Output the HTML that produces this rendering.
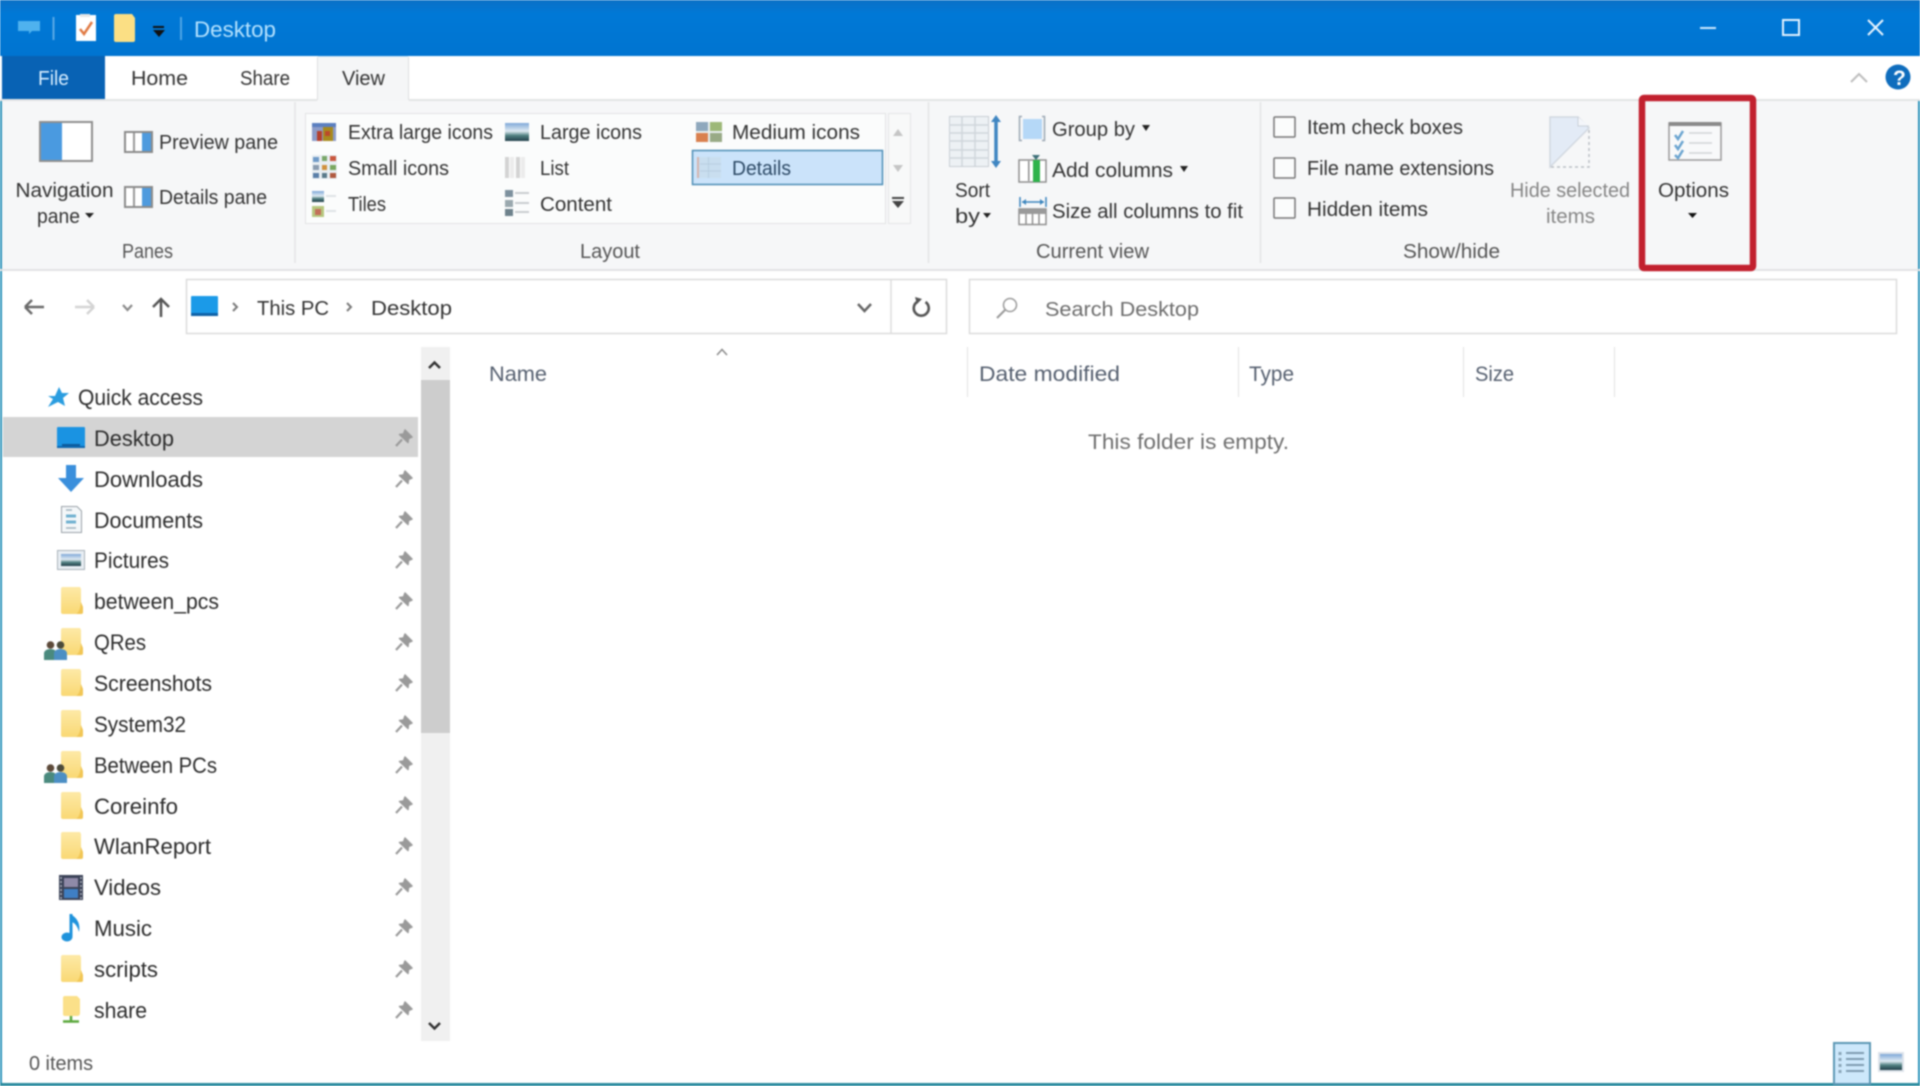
<!DOCTYPE html>
<html lang="en"><head><meta charset="utf-8"><title>Desktop</title>
<style>
html,body{margin:0;padding:0;background:#fff;width:1920px;height:1086px;overflow:hidden}
svg{display:block;filter:blur(.7px)}
text{font-family:"Liberation Sans",sans-serif;font-size:20px;fill:#333;white-space:pre}
.n{font-size:22px;fill:#2c2c2c}
.g{fill:#555}
.d{fill:#868686}
.h{font-size:21px;fill:#566070}
</style></head><body>
<svg width="1920" height="1086" viewBox="0 0 1920 1086" xmlns="http://www.w3.org/2000/svg">
<defs>
<linearGradient id="fg" x1="0" y1="0" x2="0" y2="1"><stop offset="0" stop-color="#fde9a6"/><stop offset="1" stop-color="#f9d874"/></linearGradient>
<linearGradient id="tb" x1="0" y1="0" x2="0" y2="1"><stop offset="0" stop-color="#0a70c6"/><stop offset=".25" stop-color="#0078d6"/><stop offset="1" stop-color="#0074d0"/></linearGradient>
<linearGradient id="pic" x1="0" y1="0" x2="0" y2="1"><stop offset="0" stop-color="#7fa8d8"/><stop offset=".45" stop-color="#dfeaf2"/><stop offset=".7" stop-color="#4f7f80"/><stop offset="1" stop-color="#233f4a"/></linearGradient>
<symbol id="folder" viewBox="0 0 22 27" width="22" height="27"><path d="M0 2Q0 0 2 0H19L20 2V18L22 20V25Q22 27 20 27H2Q0 27 0 25Z" fill="url(#fg)"/><path d="M20 15L22 20V25Q22 27 20 27H15Q19 25 20 15Z" fill="#f1c655"/></symbol>
<symbol id="pin" viewBox="0 0 18 18" width="18" height="18"><path d="M1 17L7 10.500" stroke="#9a9a9a" stroke-width="2.200" fill="none"/><path d="M10 1L17 8L13.500 9.500L13 13.500L4.500 5.500L8.500 5Z" fill="#9a9a9a" stroke="#9a9a9a" stroke-width="1.500" stroke-linejoin="round"/></symbol>
<symbol id="ppl" viewBox="0 0 23 20" width="23" height="20"><circle cx="6.500" cy="5" r="3.800" fill="#5d4a3a"/><circle cx="16.500" cy="5" r="3.800" fill="#4b4a3a"/><path d="M0 20V13Q1 9 6.500 9T12 13V20Z" fill="#4a8a7e"/><path d="M10 20V13Q11 9 16.500 9T23 13V20Z" fill="#4c8fc4"/></symbol>
<symbol id="pane" viewBox="0 0 29 22" width="29" height="22"><rect x="1" y="1" width="27" height="20" fill="#fff" stroke="#8b8b8b" stroke-width="2"/><rect x="9" y="2" width="2" height="18" fill="#999"/><rect x="18" y="2" width="9" height="18" fill="#4f9bde"/></symbol>
</defs>

<rect width="1920" height="1086" fill="#fff"/>
<rect x="0" y="56" width="2" height="1030" fill="#2b93ba"/>
<rect x="1918" y="56" width="2" height="1030" fill="#2b93ba"/>
<rect x="0" y="1083" width="1920" height="3" fill="#2a8b9e"/>

<rect width="1920" height="56" fill="url(#tb)"/>
<path d="M18 21H40V31H32L29 34V31H18Z" fill="#4fb2ee"/>
<rect x="52.500" y="17" width="2" height="23" fill="#5aa9e6"/>
<rect x="76" y="15" width="20" height="26" fill="#fff"/><rect x="80" y="14" width="10" height="3" fill="#e5e5e5"/>
<path d="M80 29L84 34L92 22" fill="none" stroke="#e07a44" stroke-width="2.500"/>
<path d="M114 16Q114 14 116 14H132L135 18V40Q135 42 133 42H116Q114 42 114 40Z" fill="#fbdf84"/>
<rect x="153" y="26" width="11" height="2" fill="#111"/><path d="M153 30H165L159 37Z" fill="#111"/>
<rect x="180" y="17" width="2" height="23" fill="#4fa5e4"/>
<text x="194" y="37" textLength="82" lengthAdjust="spacingAndGlyphs" style="fill:#b4e2ff;font-size:22px">Desktop</text>
<rect x="1700" y="27" width="16" height="2" fill="#cfeaff"/>
<rect x="1783" y="20" width="16" height="15" fill="none" stroke="#e4f3ff" stroke-width="2"/>
<path d="M1868 20L1883 35M1883 20L1868 35" stroke="#e8f5ff" stroke-width="2"/>

<rect x="0" y="56" width="1920" height="44" fill="#fff"/>
<rect x="2" y="56" width="103" height="43" fill="#0862b4"/>
<rect x="0" y="99" width="1920" height="2" fill="#e3e4e5"/>
<rect x="317" y="57" width="92" height="44" fill="#f5f6f7"/>
<path d="M317.500 100V57M408.500 100V57" stroke="#dedfe0"/>
<rect x="318" y="56" width="90" height="1" fill="#cfe6f5"/>
<text x="38" y="85" textLength="31" lengthAdjust="spacingAndGlyphs" style="fill:#d7edff">File</text>
<text x="131" y="85" textLength="57" lengthAdjust="spacingAndGlyphs">Home</text>
<text x="240" y="85" textLength="50" lengthAdjust="spacingAndGlyphs">Share</text>
<text x="342" y="85" textLength="43" lengthAdjust="spacingAndGlyphs">View</text>
<path d="M1851 82L1859 74L1867 82" fill="none" stroke="#bdbdbd" stroke-width="2"/>
<circle cx="1898" cy="77" r="12.500" fill="#0f6dbd"/>
<text x="1893" y="85" style="fill:#fff;font-size:21px;font-weight:bold">?</text>

<rect x="2" y="101" width="1916" height="168" fill="#f6f7f8"/>
<rect x="0" y="269" width="1920" height="2" fill="#e2e3e4"/>
<path d="M295 102V263M928.500 102V263M1260.500 102V263" stroke="#e3e4e5" stroke-width="1.500"/>

<rect x="40" y="122" width="52" height="39" fill="#fff" stroke="#8f8f8f" stroke-width="2"/>
<rect x="41" y="123" width="21" height="37" fill="#4a9ae0"/>
<text x="15.500" y="197" textLength="98" lengthAdjust="spacingAndGlyphs">Navigation</text>
<text x="37" y="223" textLength="43" lengthAdjust="spacingAndGlyphs">pane</text>
<path d="M85 213H94L89.500 218Z" fill="#222"/>
<use href="#pane" x="124" y="131"/>
<use href="#pane" x="124" y="186"/>
<text x="159" y="149" textLength="119" lengthAdjust="spacingAndGlyphs">Preview pane</text>
<text x="159" y="204" textLength="108" lengthAdjust="spacingAndGlyphs">Details pane</text>
<text x="122" y="258" textLength="51" lengthAdjust="spacingAndGlyphs" class="g">Panes</text>

<rect x="305.500" y="113.500" width="580" height="110" fill="#fbfcfc" stroke="#e2e3e4"/>
<rect x="888.500" y="113.500" width="22" height="110" fill="#f8f9f9" stroke="#e4e5e6"/>
<path d="M893 136L898 129L903 136Z" fill="#c5c5c5"/>
<path d="M893 165L898 172L903 165Z" fill="#c5c5c5"/>
<rect x="892" y="197" width="12" height="2" fill="#444"/><path d="M892 201H904L898 208Z" fill="#444"/>
<rect x="692.500" y="150.500" width="190" height="34" fill="#cbe3fa" stroke="#4d8db5" stroke-width="1.500"/>

<g>
<rect x="312" y="123" width="24" height="18" fill="#8d9cc8"/><rect x="312" y="123" width="24" height="4" fill="#5b7fc0"/>
<rect x="317" y="131" width="5" height="10" fill="#b5402d"/><rect x="323" y="127" width="10" height="14" fill="#a88a1e"/><rect x="325" y="131" width="5" height="5" fill="#bb4a2a"/>
</g>
<g>
<rect x="312" y="155" width="25" height="24" fill="#e8eef2"/>
<rect x="313" y="157" width="6" height="5" fill="#6f9bc8"/><rect x="322" y="156" width="5" height="5" fill="#7aa76a"/><rect x="330" y="156" width="6" height="5" fill="#c9583f"/>
<rect x="313" y="165" width="6" height="5" fill="#8a9cb0"/><rect x="322" y="165" width="5" height="5" fill="#d0913c"/><rect x="330" y="165" width="6" height="5" fill="#7aa760"/>
<rect x="313" y="173" width="6" height="5" fill="#5a7fa8"/><rect x="322" y="173" width="5" height="5" fill="#5a7a8a"/><rect x="330" y="173" width="6" height="5" fill="#b05a40"/>
</g>
<g>
<rect x="312" y="191" width="12" height="11" fill="url(#pic)"/><rect x="326" y="195" width="10" height="2" fill="#dfe2e5"/>
<rect x="312" y="206" width="12" height="11" fill="#b6c77e"/><rect x="315" y="209" width="6" height="6" fill="#c2705a"/><rect x="326" y="210" width="10" height="2" fill="#dfe2e5"/>
</g>
<text x="348" y="139" textLength="145" lengthAdjust="spacingAndGlyphs">Extra large icons</text>
<text x="348" y="175" textLength="101" lengthAdjust="spacingAndGlyphs">Small icons</text>
<text x="348" y="211" textLength="38" lengthAdjust="spacingAndGlyphs">Tiles</text>
<rect x="505" y="123" width="24" height="18" fill="url(#pic)"/>
<g fill="#d3d3d3"><rect x="505" y="157" width="4" height="21"/><rect x="516" y="157" width="4" height="21"/><rect x="510" y="157" width="4" height="21" fill="#ececec"/><rect x="521" y="157" width="4" height="21" fill="#ececec"/></g>
<g><rect x="505" y="190" width="8" height="7" fill="#7d919e"/><rect x="505" y="200" width="8" height="7" fill="#9aa8ae"/><rect x="505" y="209" width="8" height="7" fill="#6e828c"/>
<rect x="515" y="192" width="14" height="2" fill="#c9ccd0"/><rect x="515" y="202" width="14" height="2" fill="#c9ccd0"/><rect x="515" y="211" width="14" height="2" fill="#c9ccd0"/></g>
<text x="540" y="139" textLength="102" lengthAdjust="spacingAndGlyphs">Large icons</text>
<text x="540" y="175" textLength="29" lengthAdjust="spacingAndGlyphs">List</text>
<text x="540" y="211" textLength="72" lengthAdjust="spacingAndGlyphs">Content</text>
<g><rect x="696" y="122" width="26" height="20" fill="#e8eef0"/><rect x="696" y="122" width="12" height="9" fill="#8fa8bd"/><rect x="710" y="122" width="12" height="9" fill="#9db878"/><rect x="696" y="133" width="12" height="9" fill="#d9804f"/><rect x="710" y="133" width="12" height="9" fill="#98aa86"/></g>
<text x="732" y="139" textLength="128" lengthAdjust="spacingAndGlyphs">Medium icons</text>
<g><rect x="697" y="157" width="24" height="21" fill="#c9deef"/><rect x="697" y="157" width="2" height="21" fill="#d4b4ae"/><path d="M700 164H721M700 171H721" stroke="#b7cde0"/><path d="M708.500 157V178" stroke="#b7cde0"/></g>
<text x="732" y="175" textLength="59" lengthAdjust="spacingAndGlyphs" style="fill:#2d4a66">Details</text>
<text x="580" y="258" textLength="60" lengthAdjust="spacingAndGlyphs" class="g">Layout</text>

<g>
<rect x="949.500" y="116.500" width="39" height="50" fill="#edf1f4" stroke="#c8ced4"/>
<path d="M949 125H989M949 133H989M949 141H989M949 150H989M949 158H989M962 116V166M975 116V166" stroke="#cfd6dc" stroke-width="1.500"/>
<path d="M996 118V165" stroke="#3f86c2" stroke-width="3.500"/>
<path d="M991 122L996 115L1001 122ZM991 161L996 168L1001 161Z" fill="#3f86c2"/>
</g>
<text x="955" y="197" textLength="35" lengthAdjust="spacingAndGlyphs">Sort</text>
<text x="955" y="223" textLength="25" lengthAdjust="spacingAndGlyphs">by</text>
<path d="M983 213H991L987 218Z" fill="#222"/>
<rect x="1023" y="119" width="19" height="20" fill="#b5d8f7"/>
<path d="M1022 116.500H1019.500V140.500H1022M1042 116.500H1044.500V140.500H1042" fill="none" stroke="#9ba8b4" stroke-width="1.500"/>
<text x="1052" y="136" textLength="83" lengthAdjust="spacingAndGlyphs">Group by</text>
<path d="M1142 125H1150L1146 131Z" fill="#222"/>
<rect x="1019" y="160" width="27" height="22" fill="#fff" stroke="#8e8e8e" stroke-width="1.500"/>
<rect x="1028" y="161" width="1.500" height="20" fill="#8e8e8e"/>
<rect x="1033" y="160" width="7" height="22" fill="#2eb34b"/>
<path d="M1032 155H1040L1036 160Z" fill="#3d6f78"/>
<text x="1052" y="177" textLength="121" lengthAdjust="spacingAndGlyphs">Add columns</text>
<path d="M1180 166H1188L1184 172Z" fill="#222"/>
<path d="M1020 197V207M1046 197V207M1022 202H1044" stroke="#3b85be" stroke-width="1.500" fill="none"/>
<path d="M1022 202L1026 199V205ZM1044 202L1040 199V205Z" fill="#3b85be"/>
<rect x="1019" y="209" width="27" height="15.500" fill="#fff" stroke="#8e8e8e" stroke-width="1.500"/>
<rect x="1019" y="209" width="27" height="5" fill="#9a9a9a"/>
<path d="M1026 214V224M1032.500 214V224M1039 214V224" stroke="#8e8e8e" stroke-width="1.500"/>
<text x="1052" y="218" textLength="191" lengthAdjust="spacingAndGlyphs">Size all columns to fit</text>
<text x="1036" y="258" textLength="113" lengthAdjust="spacingAndGlyphs" class="g">Current view</text>

<g fill="#fbfcfc" stroke="#777" stroke-width="1.500">
<rect x="1274" y="117" width="21" height="20" rx="1"/>
<rect x="1274" y="158" width="21" height="20" rx="1"/>
<rect x="1274" y="198" width="21" height="20" rx="1"/>
</g>
<text x="1307" y="134" textLength="156" lengthAdjust="spacingAndGlyphs">Item check boxes</text>
<text x="1307" y="175" textLength="187" lengthAdjust="spacingAndGlyphs">File name extensions</text>
<text x="1307" y="216" textLength="121" lengthAdjust="spacingAndGlyphs">Hidden items</text>
<path d="M1550 117H1578L1589 128L1550 167Z" fill="#e3ebf6" stroke="#d2d8e0" stroke-width="1.500"/>
<path d="M1578 117V126H1589" fill="#f4f6fa" stroke="#c9d0d8"/>
<path d="M1589 130V167H1551" fill="none" stroke="#b9bec4" stroke-width="1.500" stroke-dasharray="3 3"/>
<text x="1510" y="197" textLength="120" lengthAdjust="spacingAndGlyphs" class="d">Hide selected</text>
<text x="1546" y="223" textLength="49" lengthAdjust="spacingAndGlyphs" class="d">items</text>
<text x="1403" y="258" textLength="97" lengthAdjust="spacingAndGlyphs" class="g">Show/hide</text>

<rect x="1669" y="123" width="52" height="37" fill="#f8f9fa" stroke="#9a9a9a" stroke-width="1.500"/>
<rect x="1669" y="122" width="52" height="4" fill="#8a8a8a"/>
<path d="M1675 135L1678 139L1683 131M1675 145L1678 149L1683 141M1675 155L1678 158L1683 150" fill="none" stroke="#6aa4d0" stroke-width="2.500"/>
<path d="M1689 133H1712M1689 143H1712M1689 153H1712" stroke="#d0d3d6" stroke-width="1.500"/>
<text x="1658" y="197" textLength="71" lengthAdjust="spacingAndGlyphs">Options</text>
<path d="M1688 213H1697L1692.500 218Z" fill="#111"/>
<rect x="1642" y="98" width="111" height="170" rx="2" fill="none" stroke="#c2202e" stroke-width="6.500"/>

<path d="M25 307H44M25 307L32 300M25 307L32 314" fill="none" stroke="#6a6a6a" stroke-width="2.500"/>
<path d="M75 307H94M94 307L87 300M94 307L87 314" fill="none" stroke="#d4d4d4" stroke-width="2.500"/>
<path d="M123 305L127.500 310L132 305" fill="none" stroke="#8a8a8a" stroke-width="2.200"/>
<path d="M161 317V299M153 307L161 299L169 307" fill="none" stroke="#555" stroke-width="2.500"/>
<rect x="186.500" y="279.500" width="760" height="54" fill="#fff" stroke="#dcdcdc" stroke-width="1.500"/>
<path d="M891 280V334" stroke="#dcdcdc" stroke-width="1.500"/>
<rect x="191" y="296" width="27" height="20" rx="1" fill="#1b9ae8"/><rect x="191" y="313" width="27" height="3" fill="#0e62a8"/>
<path d="M233 303L237 307L233 311" fill="none" stroke="#7a7a7a" stroke-width="2"/>
<text x="257" y="315" textLength="72" lengthAdjust="spacingAndGlyphs">This PC</text>
<path d="M347 303L351 307L347 311" fill="none" stroke="#7a7a7a" stroke-width="2"/>
<text x="371" y="315" textLength="81" lengthAdjust="spacingAndGlyphs">Desktop</text>
<path d="M858 304L864.500 311L871 304" fill="none" stroke="#666" stroke-width="2.500"/>
<path d="M925.500 302A7.500 7.500 0 1 1 917 302" fill="none" stroke="#555" stroke-width="2.600"/>
<path d="M915 297L922 299L917 304Z" fill="#555"/>
<rect x="969.500" y="279.500" width="927" height="54" fill="#fff" stroke="#dcdcdc" stroke-width="1.500"/>
<circle cx="1010" cy="305" r="6.500" fill="none" stroke="#9a9a9a" stroke-width="1.500"/>
<path d="M1005 310L997 318" stroke="#9a9a9a" stroke-width="2"/>
<text x="1045" y="316" textLength="154" lengthAdjust="spacingAndGlyphs" style="fill:#6d6d6d">Search Desktop</text>

<rect x="421" y="347" width="29" height="694" fill="#f0f0f0"/>
<rect x="421" y="380" width="29" height="353" fill="#cdcdcd"/>
<path d="M429 368L434.500 362.500L440 368" fill="none" stroke="#333" stroke-width="2.500"/>
<path d="M429 1023L434.500 1028.500L440 1023" fill="none" stroke="#333" stroke-width="2.500"/>

<rect x="3" y="417" width="415" height="40" fill="#d4d4d4"/>
<path d="M59 387L62 393H69L63 398L65 406L58 402L48 407L53 399L48 396H55Z" fill="#2a9de0"/>
<text x="78" y="405" textLength="125" lengthAdjust="spacingAndGlyphs" class="n">Quick access</text>

<rect x="57" y="427" width="28" height="21" rx="1" fill="#1a93e2"/><rect x="62" y="444" width="18" height="2" fill="#0d5a9a"/><rect x="57" y="446" width="28" height="2" fill="#0c67b0"/>
<text x="94" y="446" textLength="80" lengthAdjust="spacingAndGlyphs" class="n">Desktop</text>
<path d="M66 465H76V478H84L71 492L58 478H66Z" fill="#3a8fdc"/>
<text x="94" y="487" textLength="109" lengthAdjust="spacingAndGlyphs" class="n">Downloads</text>
<path d="M61.500 506.500H77L81.500 511V532.500H61.500Z" fill="#f4f7f9" stroke="#9aa2a8"/>
<path d="M66 516H76M66 522H76" stroke="#6fb0d0" stroke-width="3"/><path d="M66 510H72M66 528H76" stroke="#9fb2bd" stroke-width="1.500"/>
<text x="94" y="528" textLength="109" lengthAdjust="spacingAndGlyphs" class="n">Documents</text>
<rect x="57.500" y="550.500" width="27" height="19" fill="#e8eef3" stroke="#a8b2ba"/><rect x="61" y="554" width="20" height="12" fill="url(#pic)"/>
<text x="94" y="568" textLength="75" lengthAdjust="spacingAndGlyphs" class="n">Pictures</text>

<use href="#folder" x="61" y="587"/>
<text x="94" y="609" textLength="125" lengthAdjust="spacingAndGlyphs" class="n">between_pcs</text>
<use href="#folder" x="61" y="628"/><use href="#ppl" x="44" y="640"/>
<text x="94" y="650" textLength="52" lengthAdjust="spacingAndGlyphs" class="n">QRes</text>
<use href="#folder" x="61" y="669"/>
<text x="94" y="691" textLength="118" lengthAdjust="spacingAndGlyphs" class="n">Screenshots</text>
<use href="#folder" x="61" y="710"/>
<text x="94" y="732" textLength="92" lengthAdjust="spacingAndGlyphs" class="n">System32</text>
<use href="#folder" x="61" y="751"/><use href="#ppl" x="44" y="763"/>
<text x="94" y="773" textLength="123" lengthAdjust="spacingAndGlyphs" class="n">Between PCs</text>
<use href="#folder" x="61" y="792"/>
<text x="94" y="814" textLength="84" lengthAdjust="spacingAndGlyphs" class="n">Coreinfo</text>
<use href="#folder" x="61" y="832"/>
<text x="94" y="854" textLength="117" lengthAdjust="spacingAndGlyphs" class="n">WlanReport</text>
<rect x="59" y="875" width="24" height="25" fill="#3b4257"/><rect x="64" y="878" width="14" height="9" fill="#8f8aa8"/><rect x="64" y="889" width="14" height="9" fill="#3f7fc4"/>
<path d="M61 877V899M81 877V899" stroke="#b0b4c0" stroke-width="1.500" stroke-dasharray="2 2"/>
<text x="94" y="895" textLength="67" lengthAdjust="spacingAndGlyphs" class="n">Videos</text>
<path d="M71 914V936" stroke="#1f93dc" stroke-width="3"/><ellipse cx="67" cy="937" rx="5.500" ry="4.500" fill="#1f93dc"/><path d="M72 915Q81 921 79 932Q77 924 72 922Z" fill="#1f93dc"/>
<text x="94" y="936" textLength="58" lengthAdjust="spacingAndGlyphs" class="n">Music</text>
<use href="#folder" x="61" y="955"/>
<text x="94" y="977" textLength="64" lengthAdjust="spacingAndGlyphs" class="n">scripts</text>
<path d="M63 998Q63 996 65 996H77L80 999V1013Q80 1016 77 1016H65Q63 1016 63 1014Z" fill="#fbe089"/>
<path d="M71 1016V1021M63 1021.500H79" stroke="#5ba83c" stroke-width="2.500"/>
<text x="94" y="1018" textLength="53" lengthAdjust="spacingAndGlyphs" class="n">share</text>

<g>
<use href="#pin" x="395" y="429"/><use href="#pin" x="395" y="470"/><use href="#pin" x="395" y="511"/><use href="#pin" x="395" y="551"/><use href="#pin" x="395" y="592"/><use href="#pin" x="395" y="633"/><use href="#pin" x="395" y="674"/><use href="#pin" x="395" y="715"/><use href="#pin" x="395" y="756"/><use href="#pin" x="395" y="796"/><use href="#pin" x="395" y="837"/><use href="#pin" x="395" y="878"/><use href="#pin" x="395" y="919"/><use href="#pin" x="395" y="960"/><use href="#pin" x="395" y="1001"/>
</g>

<path d="M717 355L722 349.500L727 355" fill="none" stroke="#8a8a8a" stroke-width="1.500"/>
<text x="489" y="381" textLength="58" lengthAdjust="spacingAndGlyphs" class="h">Name</text>
<path d="M967.500 347V397M1238.500 347V397M1463.500 347V397M1614.500 347V397" stroke="#e6e6e6" stroke-width="1.200"/>
<text x="979" y="381" textLength="141" lengthAdjust="spacingAndGlyphs" class="h">Date modified</text>
<text x="1249" y="381" textLength="45" lengthAdjust="spacingAndGlyphs" class="h">Type</text>
<text x="1475" y="381" textLength="39" lengthAdjust="spacingAndGlyphs" class="h">Size</text>
<text x="1088" y="449" textLength="201" lengthAdjust="spacingAndGlyphs" style="fill:#6f6f6f;font-size:21px">This folder is empty.</text>

<text x="29" y="1070" textLength="64" lengthAdjust="spacingAndGlyphs" style="fill:#555">0 items</text>
<rect x="1834" y="1043" width="36" height="41" fill="#cde8fb" stroke="#5c97b4" stroke-width="2"/>
<path d="M1840 1052V1076" stroke="#8aa5b8" stroke-width="3" stroke-dasharray="3 3"/>
<path d="M1846 1053H1864M1846 1059H1864M1846 1065H1864M1846 1071H1864" stroke="#7f9bb0" stroke-width="2"/>
<rect x="1878" y="1052" width="26" height="20" fill="#dde3ea"/><rect x="1880" y="1054" width="22" height="16" fill="url(#pic)"/>
</svg>
</body></html>
